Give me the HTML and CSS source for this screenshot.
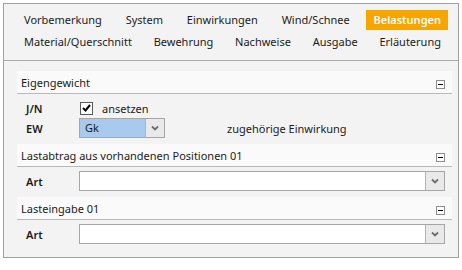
FILE: index.html
```html
<!DOCTYPE html>
<html lang="de">
<head>
    <meta charset="UTF-8">
    <title>Belastungen</title>
    <link rel="stylesheet" href="styles.css">
</head>
<body>
    <div class="frame">
        <!-- Tab navigation -->
        <nav class="tabs">
            <div class="tab-row">
                <span class="tab">Vorbemerkung</span>
                <span class="tab">System</span>
                <span class="tab">Einwirkungen</span>
                <span class="tab">Wind/Schnee</span>
                <span class="tab active">Belastungen</span>
            </div>
            <div class="tab-row">
                <span class="tab">Material/Querschnitt</span>
                <span class="tab">Bewehrung</span>
                <span class="tab">Nachweise</span>
                <span class="tab">Ausgabe</span>
                <span class="tab">Erläuterung</span>
            </div>
        </nav>

        <div class="content">
            <!-- Eigengewicht -->
            <section class="group">
                <div class="group-head">
                    <span>Eigengewicht</span>
                    <span class="collapse"></span>
                </div>
                <div class="field-row">
                    <span class="label">J/N</span>
                    <span class="check">
                        <span class="box">
                            <svg width="9" height="8" viewBox="0 0 9 8"><polyline points="1,4 3.5,6.5 8,1" fill="none" stroke="#000" stroke-width="2"/></svg>
                        </span>
                        ansetzen
                    </span>
                </div>
                <div class="field-row">
                    <span class="label">EW</span>
                    <div class="combo combo-short selected">
                        <span class="combo-value">Gk</span>
                        <span class="combo-btn">
                            <svg width="8" height="6" viewBox="0 0 8 6"><polyline points="1,1.5 4,4.5 7,1.5" fill="none" stroke="#6e6e6e" stroke-width="1.8"/></svg>
                        </span>
                    </div>
                    <span class="hint">zugehörige Einwirkung</span>
                </div>
            </section>

            <!-- Lastabtrag -->
            <section class="group">
                <div class="group-head">
                    <span>Lastabtrag aus vorhandenen Positionen 01</span>
                    <span class="collapse"></span>
                </div>
                <div class="field-row">
                    <span class="label">Art</span>
                    <div class="combo combo-wide">
                        <span class="combo-value"></span>
                        <span class="combo-btn">
                            <svg width="8" height="6" viewBox="0 0 8 6"><polyline points="1,1.5 4,4.5 7,1.5" fill="none" stroke="#6e6e6e" stroke-width="1.8"/></svg>
                        </span>
                    </div>
                </div>
            </section>

            <!-- Lasteingabe -->
            <section class="group">
                <div class="group-head">
                    <span>Lasteingabe 01</span>
                    <span class="collapse"></span>
                </div>
                <div class="field-row">
                    <span class="label">Art</span>
                    <div class="combo combo-wide">
                        <span class="combo-value"></span>
                        <span class="combo-btn">
                            <svg width="8" height="6" viewBox="0 0 8 6"><polyline points="1,1.5 4,4.5 7,1.5" fill="none" stroke="#6e6e6e" stroke-width="1.8"/></svg>
                        </span>
                    </div>
                </div>
            </section>
        </div>
    </div>
</body>
</html>
```

FILE: styles.css
```css
/* Page */
html, body {
    margin: 0;
    padding: 0;
    background: #ffffff;
    font-family: "Noto Sans", "Open Sans", sans-serif;
    font-size: 11px;
    color: #1b1b1b;
}

body {
    padding: 3px;
}

/* Outer frame */
.frame {
    width: 454px;
    height: 253px;
    border: 1px solid #a0a0a0;
    background: #f3f3f3;
}

/* Tabs */
.tabs {
    padding: 6px 10px 8px 13px;
    border-bottom: 1px solid #a9a9a9;
    display: flex;
    flex-direction: column;
    gap: 2px;
}

.tab-row {
    display: flex;
    justify-content: space-between;
}

.tab {
    height: 20px;
    line-height: 20px;
    padding: 0 7px;
    white-space: nowrap;
}

.tab.active {
    background: #f7a500;
    color: #ffffff;
    font-weight: 600;
}

/* Content */
.content {
    padding: 10px 6px 0 13px;
    display: flex;
    flex-direction: column;
    gap: 6px;
}

.group-head {
    height: 22px;
    padding: 0 7px 0 4px;
    background: #fafafa;
    border-bottom: 1px solid #b9b9b9;
    display: flex;
    align-items: center;
    justify-content: space-between;
}

.collapse {
    width: 7px;
    height: 7px;
    margin-top: 4px;
    border: 1px solid #8c8c8c;
    background: #ffffff;
    display: flex;
    align-items: center;
    justify-content: center;
}

.collapse::before {
    content: "";
    width: 5px;
    height: 1px;
    background: #000000;
}

.field-row {
    height: 20px;
    margin-top: 4px;
    padding-left: 9px;
    display: flex;
    align-items: center;
}

.group .field-row + .field-row {
    margin-top: 0;
}

.label {
    width: 53px;
    font-weight: 600;
}

/* Checkbox */
.check {
    display: flex;
    align-items: center;
    gap: 9px;
    margin-left: 1px;
}

.box {
    width: 11px;
    height: 11px;
    border: 1px solid #5a5a5a;
    background: #ffffff;
    display: flex;
    align-items: center;
    justify-content: center;
}

/* Combobox */
.combo {
    height: 18px;
    border: 1px solid #a6a6a6;
    background: #ffffff;
    display: flex;
}

.combo.selected {
    background: #a9c9ef;
}

.combo-short {
    width: 84px;
}

.combo-wide {
    width: 364px;
}

.combo-value {
    flex: 1;
    line-height: 18px;
    padding-left: 5px;
}

.combo-btn {
    width: 18px;
    border-left: 1px solid #b4b4b4;
    background: #e9e9e9;
    display: flex;
    align-items: center;
    justify-content: center;
}

.hint {
    margin-left: 62px;
}
```
